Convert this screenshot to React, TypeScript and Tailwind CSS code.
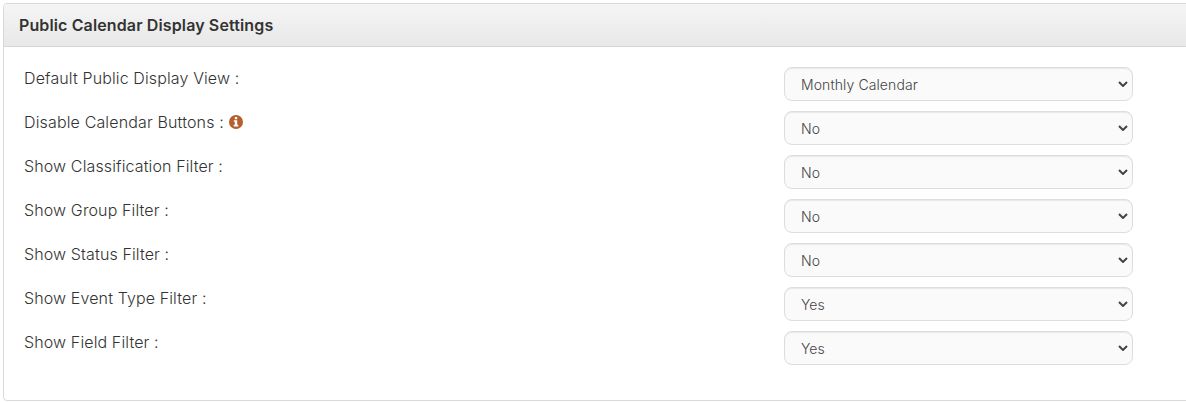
import React from "react";

type Row = { label: string; value: string; info?: boolean };

const rows: Row[] = [
  { label: "Default Public Display View :", value: "Monthly Calendar" },
  { label: "Disable Calendar Buttons :", value: "No", info: true },
  { label: "Show Classification Filter :", value: "No" },
  { label: "Show Group Filter :", value: "No" },
  { label: "Show Status Filter :", value: "No" },
  { label: "Show Event Type Filter :", value: "Yes" },
  { label: "Show Field Filter :", value: "Yes" },
];

function InfoIcon() {
  return (
    <svg className="ml-[5px] h-[14px] w-[14px]" viewBox="0 0 14 14">
      <circle cx="7" cy="7" r="7" fill="#b5602c" />
      <path fill="#fff" d="M5.800 2h2.400v2.200H5.800zM4.800 5.200h3.400v4.600H9.300v1.700H4.700V9.800h1.100V6.800H4.800z" />
    </svg>
  );
}

function SelectField({ value }: { value: string }) {
  return (
    <div className="flex h-[34px] w-[349px] items-center justify-between rounded-lg border border-[#dddddd] bg-[#fafafa] pl-4 pr-[4px] text-[14px] font-light tracking-[0.1px] text-[#444] shadow-[inset_0_1px_1px_rgba(0,0,0,0.075)]">
      <span className="pt-px">{value}</span>
      <svg className="h-[6px] w-[10px]" viewBox="0 0 10 6" fill="none">
        <path d="M1 1L5 5L9 1" stroke="#444" strokeWidth="2" />
      </svg>
    </div>
  );
}

export default function App() {
  return (
    <div className="h-[402px] w-[1186px] overflow-hidden bg-white pl-[3px] pt-[3px] font-['Inter',sans-serif]">
      <section className="h-[398px] w-[1200px] overflow-hidden rounded border border-[#d9d9d9] bg-white">
        <header className="flex h-[43px] items-center border-b border-[#d6d6d6] bg-gradient-to-b from-[#f5f5f5] to-[#e8e8e8] pl-[15px] text-base font-semibold tracking-[0.125px] text-[#333]">
          Public Calendar Display Settings
        </header>
        <div className="flex flex-col gap-[10px] pl-5 pt-5">
          {rows.map((row) => (
            <div key={row.label} className="flex h-[34px]">
              <div className="flex h-[22px] w-[760px] items-center text-base font-light tracking-[0.12px] text-[#333]">
                <span className={row.info ? "tracking-[0.15px]" : undefined}>{row.label}</span>
                {row.info && <InfoIcon />}
              </div>
              <SelectField value={row.value} />
            </div>
          ))}
        </div>
      </section>
    </div>
  );
}
